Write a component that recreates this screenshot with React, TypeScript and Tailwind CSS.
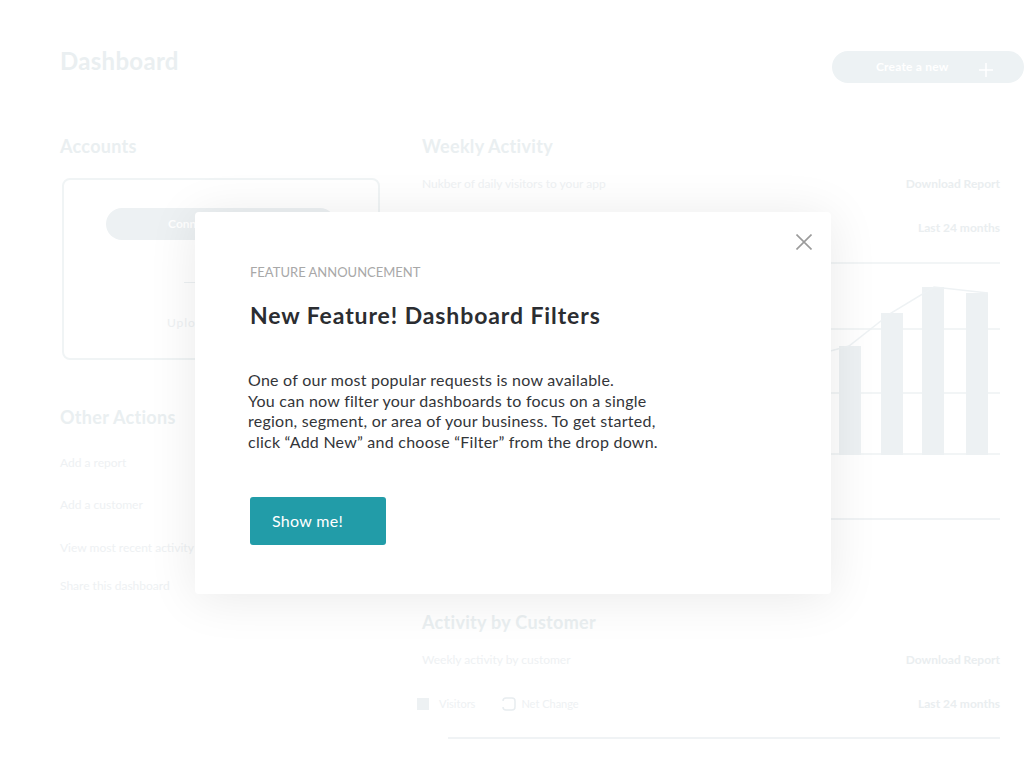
const faint = 'text-[#eaeff1]';

function WeeklyChart() {
  // bar heights are only a sketch; most of them sit under the modal
  const bars = [
    { x: 460, top: 400 },
    { x: 502, top: 380 },
    { x: 544, top: 360 },
    { x: 586, top: 372 },
    { x: 628, top: 350 },
    { x: 670, top: 330 },
    { x: 712, top: 340 },
    { x: 754, top: 320 },
    { x: 796, top: 360 },
    { x: 838, top: 346 },
    { x: 880, top: 313 },
    { x: 921, top: 287 },
    { x: 965, top: 293 },
  ];
  return (
    <svg width="578" height="280" viewBox="421 250 578 280" className="block">
      {[263, 329, 393, 454].map(y => (
        <line key={y} x1="447" x2="999" y1={y} y2={y} stroke="#f2f5f6" strokeWidth="2" />
      ))}
      {bars.map(b => (
        <rect key={b.x} x={b.x} y={b.top} width="22" height={455 - b.top} fill="#edf1f3" />
      ))}
      <polyline
        points="796,360 833,350 848,346 890,313 933,287 987,293"
        fill="none"
        stroke="#eef2f4"
        strokeWidth="1.5"
      />
      <line x1="447" x2="999" y1="519" y2="519" stroke="#f0f3f5" strokeWidth="2" />
    </svg>
  );
}

export default function App() {
  return (
    <div
      className="relative w-[1024px] h-[765px] overflow-hidden bg-white"
      style={{ fontFamily: 'Lato, "Open Sans", sans-serif' }}
    >
      {/* faded dashboard behind the announcement */}
      <div className="pl-[60px] pr-[25px] pt-[45px]">
        <div className="flex items-start justify-between mr-[-25px]">
          <h1 className={`text-[24px] leading-[32px] font-bold tracking-[0.3px] ${faint}`}>Dashboard</h1>
          <div className="mt-[6px] w-[192px] h-[32px] rounded-full bg-[#edf2f4] flex items-center pl-[44px] pr-[30px] justify-between">
            <span className="text-[12px] font-bold text-white tracking-[0.2px]">Create a new</span>
            <svg width="16" height="16" viewBox="0 0 16 16" className="mt-[6px]">
              <path d="M8 1v14M1 8h14" stroke="white" strokeWidth="1.5" />
            </svg>
          </div>
        </div>

        <div className="flex gap-[42px] mt-[51px]">
          {/* left column */}
          <div className="w-[320px] flex flex-col">
            <h2 className={`text-[18px] leading-[24px] font-bold tracking-[0.3px] ${faint}`}>Accounts</h2>
            <div className="mt-[20px] ml-[2px] w-[318px] h-[182px] rounded-lg border-2 border-[#f0f4f5] flex flex-col items-center pt-[28px]">
              <div className="w-[230px] h-[32px] rounded-full bg-[#edf1f3] flex items-center justify-center">
                <span className="text-[12px] font-bold text-white">Connect an account</span>
              </div>
              <div className="mt-[42px] w-[75px] h-px bg-[#edf1f3]" />
              <span className="mt-[31px] text-[12px] tracking-[1px] text-[#eef1f3]">Upload a CSV file</span>
            </div>
            <h2 className={`mt-[45px] text-[18px] leading-[24px] font-bold tracking-[0.3px] ${faint}`}>Other Actions</h2>
            <div className="mt-[26px] flex flex-col text-[12px] leading-[16px] text-[#eef1f3]">
              <span>Add a report</span>
              <span className="mt-[26px]">Add a customer</span>
              <span className="mt-[27px]">View most recent activity</span>
              <span className="mt-[22px]">Share this dashboard</span>
            </div>
          </div>

          {/* right column */}
          <div className="w-[578px] flex flex-col">
            <h2 className={`text-[18px] leading-[24px] font-bold tracking-[0.3px] ${faint}`}>Weekly Activity</h2>
            <div className="mt-[18px] flex justify-between text-[12px] leading-[16px]">
              <span className="text-[#eef1f3]">Nukber of daily visitors to your app</span>
              <span className="font-bold text-[#eaeef0]">Download Report</span>
            </div>
            <div className="mt-[28px] flex justify-end text-[12px] leading-[16px] font-bold text-[#eaeef0]">
              Last 24 months
            </div>
            <div className="mt-[14px]">
              <WeeklyChart />
            </div>
            <h2 className={`mt-[80px] text-[18px] leading-[24px] font-bold tracking-[0.3px] ${faint}`}>Activity by Customer</h2>
            <div className="mt-[18px] flex justify-between text-[12px] leading-[16px]">
              <span className="text-[#eef1f3]">Weekly activity by customer</span>
              <span className="font-bold text-[#eaeef0]">Download Report</span>
            </div>
            <div className="mt-[28px] flex items-center justify-between text-[12px] leading-[16px]">
              <div className="flex items-center ml-[-5px]">
                <span className="w-[12px] h-[12px] bg-[#edf1f3]" />
                <span className="ml-[10px] text-[11px] text-[#eef1f3]">Visitors</span>
                <svg width="16" height="14" viewBox="0 0 16 14" className="ml-[26px]">
                  <path
                    d="M2 4c0-2 1-3 3-3h6c2 0 3 1 3 3v6c0 2-1 3-3 3H5c-2 0-3-1-3-3"
                    fill="none"
                    stroke="#e8edf0"
                    strokeWidth="1.5"
                  />
                </svg>
                <span className="ml-[4px] text-[11px] text-[#eef1f3]">Net Change</span>
              </div>
              <span className="font-bold text-[#eaeef0]">Last 24 months</span>
            </div>
            <div className="mt-[25px] ml-[26px] h-[2px] bg-[#f0f3f5]" />
          </div>
        </div>
      </div>

      {/* announcement modal */}
      <div className="absolute left-[195px] top-[212px] w-[636px] h-[382px] bg-white rounded-[4px] shadow-[0_4px_50px_rgba(0,0,0,0.09)] pl-[55px] pt-[52px]">
        <button className="absolute right-[19px] top-[22px]">
          <svg width="16" height="16" viewBox="0 0 16 16" className="block">
            <path d="M0.5 0.5l15 15M15.5 0.5l-15 15" stroke="#9b9b9b" strokeWidth="1.6" />
          </svg>
        </button>
        <p className="text-[13px] leading-[16px] uppercase text-[#a8a8a8]">Feature Announcement</p>
        <h3 className="mt-[20px] text-[23px] leading-[30px] font-bold tracking-[0.9px] text-[#2b2d31]">
          New Feature! Dashboard Filters
        </h3>
        <p className="mt-[40px] ml-[-2px] w-[430px] text-[16px] leading-[20.5px] tracking-[0.25px] text-[#333539]">
          One of our most popular requests is now available.
          <br />
          You can now filter your dashboards to focus on a single region, segment, or area of your
          business. To get started, click “Add New” and choose “Filter” from the drop down.
        </p>
        <button className="mt-[45px] w-[136px] h-[48px] rounded-[3px] bg-[#229ca8] text-white text-[16px] tracking-[0.3px] text-left pl-[22px]">
          Show me!
        </button>
      </div>
    </div>
  );
}
